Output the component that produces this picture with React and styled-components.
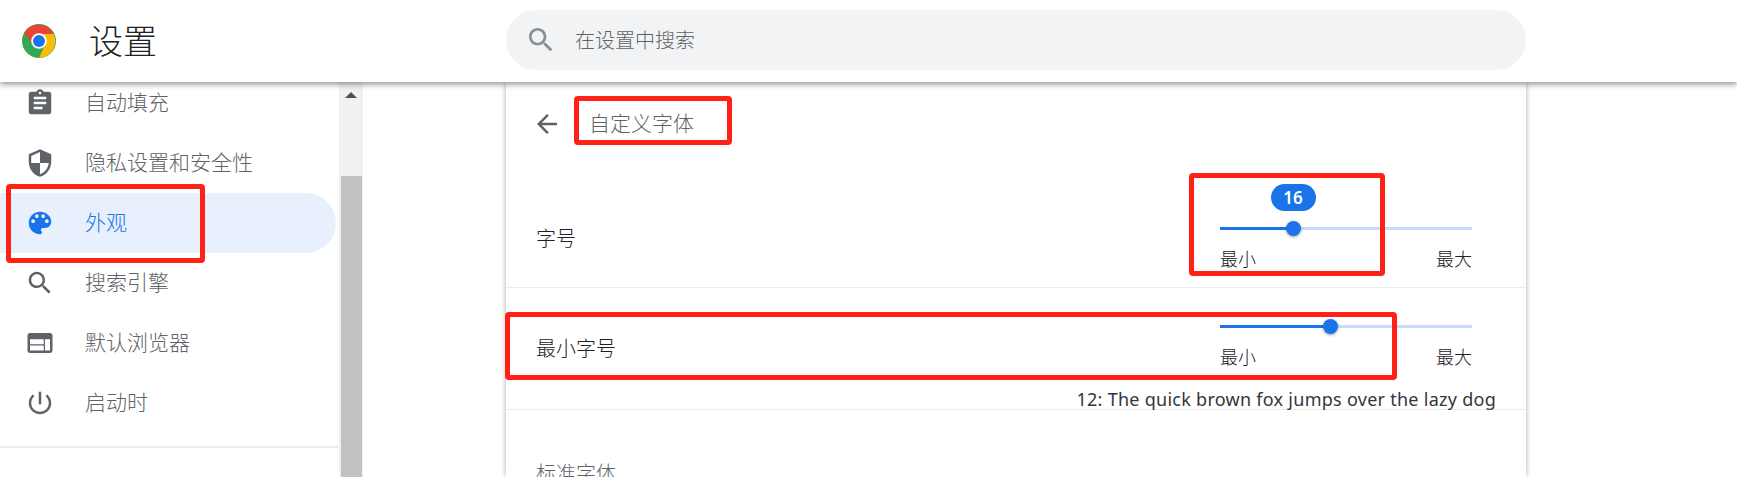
import React from "react";
import styled, { createGlobalStyle } from "styled-components";

const GlobalStyle = createGlobalStyle`
  html, body { margin: 0; padding: 0; background: #fff; }
  body { font-family: "Noto Sans CJK SC", "Noto Sans", sans-serif; }
`;

const Page = styled.div`
  position: relative;
  width: 1737px;
  height: 477px;
  overflow: hidden;
  display: flex;
  flex-direction: column;
`;

const Header = styled.header`
  position: relative;
  z-index: 2;
  flex: 0 0 82px;
  display: flex;
  align-items: center;
  background: #fff;
  box-shadow: 0 2px 6px rgba(60, 64, 67, 0.6);
`;

const Logo = styled.svg`
  width: 34px;
  height: 34px;
  margin-left: 22px;
  flex: none;
`;

const PageTitle = styled.h1`
  margin: 0 0 2px 33px;
  width: 417px;
  flex: none;
  font-size: 34px;
  font-weight: 300;
  line-height: 1;
  color: #202124;
`;

const SearchBox = styled.div`
  width: 1020px;
  height: 60px;
  margin-bottom: 2px;
  border-radius: 30px;
  background: #f1f3f4;
  display: flex;
  align-items: center;
  padding-left: 19px;
  box-sizing: border-box;
`;

const SearchIcon = styled.svg`
  width: 32px;
  height: 32px;
  fill: #8a8d91;
  flex: none;
`;

const SearchText = styled.span`
  margin: 0 0 2px 18px;
  font-size: 20px;
  font-weight: 300;
  color: #5f6368;
`;

const Body = styled.div`
  flex: 1;
  min-height: 0;
  display: flex;
`;

const Sidebar = styled.nav`
  flex: 0 0 339px;
  overflow: hidden;
`;

const NavList = styled.div`
  margin-top: -9px;
`;

const NavRow = styled.div`
  height: 60px;
  display: flex;
  align-items: center;
  padding-left: 25px;
  margin-right: 3px;
  border-radius: 0 30px 30px 0;
  background: ${(p) => (p.$active ? "#e8f0fe" : "transparent")};
  color: ${(p) => (p.$active ? "#1a73e8" : "#5f6368")};
`;

const NavIcon = styled.svg`
  width: 30px;
  height: 30px;
  fill: currentColor;
  flex: none;
`;

const NavLabel = styled.span`
  margin: 0 0 4px 30px;
  font-size: 21px;
  font-weight: 300;
`;

const NavDivider = styled.div`
  height: 2px;
  background: #ececed;
  margin-top: 13px;
  margin-bottom: 27px;
`;

const NavStub = styled.svg`
  display: block;
  margin-left: 28px;
  width: 24px;
  height: 24px;
  stroke: #5f6368;
  stroke-width: 2;
  fill: none;
`;

const ScrollTrack = styled.div`
  flex: 0 0 24px;
  background: #f1f1f1;
  display: flex;
  flex-direction: column;
  align-items: flex-end;
`;

const ScrollArrow = styled.div`
  align-self: center;
  margin-top: 10px;
  width: 0;
  height: 0;
  border-left: 6px solid transparent;
  border-right: 6px solid transparent;
  border-bottom: 6px solid #505050;
`;

const ScrollThumb = styled.div`
  width: 21px;
  margin-right: 1px;
  margin-top: 78px;
  flex: 1;
  background: #c1c1c1;
`;

const Main = styled.main`
  flex: 1;
  min-width: 0;
  padding-left: 143px;
`;

const Card = styled.section`
  width: 1020px;
  height: 100%;
  background: #fff;
  box-shadow: 0 0 5px rgba(60, 64, 67, 0.45);
  display: flex;
  flex-direction: column;
`;

const SubHeader = styled.div`
  flex: 0 0 83px;
  display: flex;
  align-items: center;
  padding: 0 0 0 26px;
  color: #5f6368;
`;

const BackIcon = styled.svg`
  width: 30px;
  height: 30px;
  fill: currentColor;
  flex: none;
`;

const SubTitle = styled.h2`
  margin: 0 0 2px 27px;
  font-size: 21px;
  font-weight: 300;
  line-height: 1;
`;

const Row = styled.div`
  flex: 0 0 ${(p) => p.$height}px;
  box-sizing: border-box;
  display: flex;
  flex-wrap: wrap;
  align-content: flex-start;
  justify-content: space-between;
  padding: ${(p) => p.$top}px 54px 0 30px;
  border-bottom: 1px solid #ececed;
`;

const RowLabel = styled.span`
  font-size: 20px;
  font-weight: 300;
  line-height: 30px;
  margin-top: ${(p) => p.$offset}px;
  color: #202124;
`;

const SliderBox = styled.div`
  width: 252px;
`;

const Track = styled.div`
  height: 3px;
  background: #c6dcf8;
  position: relative;
`;

const TrackFill = styled.div`
  height: 100%;
  background: #1a73e8;
`;

const Thumb = styled.div`
  position: absolute;
  top: -6px;
  width: 15px;
  height: 15px;
  margin-left: -7.5px;
  border-radius: 50%;
  background: #1a73e8;
  box-shadow: 0 1px 3px rgba(60, 64, 67, 0.5);
`;

const Bubble = styled.div`
  position: absolute;
  bottom: 19px;
  width: 45px;
  height: 27px;
  margin-left: -22.5px;
  border-radius: 14px;
  background: #1a73e8;
  color: #fff;
  font-family: "Noto Sans", sans-serif;
  font-size: 17px;
  font-weight: 600;
  line-height: 27px;
  text-align: center;
`;

const Scale = styled.div`
  display: flex;
  justify-content: space-between;
  margin-top: 15px;
  font-size: 18px;
  font-weight: 300;
  line-height: 26px;
  color: #202124;
`;

const Sample = styled.div`
  flex: 0 0 calc(100% + 24px);
  margin: 20px -24px 0 0;
  font-family: "Noto Sans", sans-serif;
  font-size: 18px;
  letter-spacing: 0.27px;
  line-height: 20px;
  text-align: right;
  color: #33363a;
  white-space: nowrap;
`;

const PlainLabel = styled.div`
  margin: 48px 0 0 30px;
  font-size: 20px;
  font-weight: 300;
  line-height: 30px;
  color: #5f6368;
`;

const Callout = styled.div`
  position: absolute;
  z-index: 3;
  left: ${(p) => p.$x}px;
  top: ${(p) => p.$y}px;
  width: ${(p) => p.$w}px;
  height: ${(p) => p.$h}px;
  box-sizing: border-box;
  border: 5px solid #ff2115;
  border-radius: 4px;
  pointer-events: none;
`;

const paths = {
  assignment:
    "M19 3h-4.18C14.4 1.84 13.3 1 12 1c-1.3 0-2.4.84-2.82 2H5c-1.1 0-2 .9-2 2v14c0 1.1.9 2 2 2h14c1.1 0 2-.9 2-2V5c0-1.1-.9-2-2-2zm-7 0c.55 0 1 .45 1 1s-.45 1-1 1-1-.45-1-1 .45-1 1-1zm2 14H7v-2h7v2zm3-4H7v-2h10v2zm0-4H7V7h10v2z",
  security:
    "M12 1L3 5v6c0 5.55 3.84 10.74 9 12 5.16-1.26 9-6.45 9-12V5l-9-4zm0 10.99h7c-.53 4.12-3.28 7.79-7 8.94V12H5V6.3l7-3.11v8.8z",
  palette:
    "M12 3c-4.97 0-9 4.03-9 9s4.03 9 9 9c.83 0 1.5-.67 1.5-1.5 0-.39-.15-.74-.39-1.01-.23-.26-.38-.61-.38-.99 0-.83.67-1.5 1.5-1.5H16c2.76 0 5-2.24 5-5 0-4.42-4.03-8-9-8zm-5.5 9c-.83 0-1.5-.67-1.5-1.5S5.67 9 6.5 9 8 9.67 8 10.5 7.33 12 6.5 12zm3-4C8.67 8 8 7.33 8 6.5S8.67 5 9.5 5s1.5.67 1.5 1.5S10.33 8 9.5 8zm5 0c-.83 0-1.5-.67-1.5-1.5S13.67 5 14.5 5s1.5.67 1.5 1.5S15.33 8 14.5 8zm3 4c-.83 0-1.5-.67-1.5-1.5S16.67 9 17.5 9s1.5.67 1.5 1.5-.67 1.5-1.5 1.5z",
  search:
    "M15.5 14h-.79l-.28-.27C15.41 12.59 16 11.11 16 9.5 16 5.91 13.09 3 9.5 3S3 5.91 3 9.5 5.91 16 9.5 16c1.61 0 3.09-.59 4.23-1.57l.27.28v.79l5 4.99L20.49 19l-4.99-5zm-6 0C7.01 14 5 11.99 5 9.5S7.01 5 9.5 5 14 7.01 14 9.5 11.99 14 9.5 14z",
  web: "M20 4H4c-1.1 0-1.99.9-1.99 2L2 18c0 1.1.9 2 2 2h16c1.1 0 2-.9 2-2V6c0-1.1-.9-2-2-2zm-5 14H4v-4h11v4zm0-5H4V9h11v4zm5 5h-4V9h4v9z",
  power:
    "M13 3h-2v10h2V3zm4.83 2.17l-1.42 1.42C17.99 7.86 19 9.81 19 12c0 3.87-3.13 7-7 7s-7-3.13-7-7c0-2.19 1.01-4.14 2.58-5.42L6.17 5.17C4.23 6.82 3 9.26 3 12c0 4.97 4.03 9 9 9s9-4.03 9-9c0-2.74-1.23-5.18-3.17-6.83z",
  back: "M20 11H7.83l5.59-5.59L12 4l-8 8 8 8 1.41-1.41L7.83 13H20v-2z",
};

const navItems = [
  { icon: "assignment", label: "自动填充" },
  { icon: "security", label: "隐私设置和安全性" },
  { icon: "palette", label: "外观", active: true },
  { icon: "search", label: "搜索引擎" },
  { icon: "web", label: "默认浏览器" },
  { icon: "power", label: "启动时" },
];

const callouts = [
  { x: 6, y: 184, w: 199, h: 79 },
  { x: 574, y: 96, w: 158, h: 49 },
  { x: 1189, y: 173, w: 196, h: 103 },
  { x: 505, y: 312, w: 892, h: 68 },
];

function Slider({ percent, bubble }) {
  return (
    <SliderBox>
      <Track>
        <TrackFill style={{ width: `${percent}%` }} />
        <Thumb style={{ left: `${percent}%` }} />
        {bubble && <Bubble style={{ left: `${percent}%` }}>{bubble}</Bubble>}
      </Track>
      <Scale>
        <span>最小</span>
        <span>最大</span>
      </Scale>
    </SliderBox>
  );
}

export default function App() {
  return (
    <Page>
      <GlobalStyle />
      <Header>
        <Logo viewBox="0 0 48 48">
          <circle cx="24" cy="24" r="24" fill="#34a853" />
          <path d="M24 14H44.8A24 24 0 0 0 3.2 12L15.34 29Z" fill="#ea4335" />
          <path d="M44.8 14A24 24 0 0 1 24 48L32.66 29L24 14Z" fill="#fbbc04" />
          <circle cx="24" cy="24" r="11" fill="#fff" />
          <circle cx="24" cy="24" r="8.5" fill="#1a73e8" />
        </Logo>
        <PageTitle>设置</PageTitle>
        <SearchBox>
          <SearchIcon viewBox="0 0 24 24">
            <path d={paths.search} />
          </SearchIcon>
          <SearchText>在设置中搜索</SearchText>
        </SearchBox>
      </Header>
      <Body>
        <Sidebar>
          <NavList>
            {navItems.map((item) => (
              <NavRow key={item.label} $active={item.active}>
                <NavIcon viewBox="0 0 24 24">
                  <path d={paths[item.icon]} />
                </NavIcon>
                <NavLabel>{item.label}</NavLabel>
              </NavRow>
            ))}
            <NavDivider />
            <NavStub viewBox="0 0 24 24">
              <circle cx="12" cy="12" r="9" />
            </NavStub>
          </NavList>
        </Sidebar>
        <ScrollTrack>
          <ScrollArrow />
          <ScrollThumb />
        </ScrollTrack>
        <Main>
          <Card>
            <SubHeader>
              <BackIcon viewBox="0 0 24 24">
                <path d={paths.back} />
              </BackIcon>
              <SubTitle>自定义字体</SubTitle>
            </SubHeader>
            <Row $height={123} $top={62}>
              <RowLabel $offset={-4}>字号</RowLabel>
              <Slider percent={29} bubble="16" />
            </Row>
            <Row $height={122} $top={37}>
              <RowLabel $offset={8}>最小字号</RowLabel>
              <Slider percent={43.7} />
              <Sample>12: The quick brown fox jumps over the lazy dog</Sample>
            </Row>
            <PlainLabel>标准字体</PlainLabel>
          </Card>
        </Main>
      </Body>
      {callouts.map((c) => (
        <Callout key={c.x} $x={c.x} $y={c.y} $w={c.w} $h={c.h} />
      ))}
    </Page>
  );
}
